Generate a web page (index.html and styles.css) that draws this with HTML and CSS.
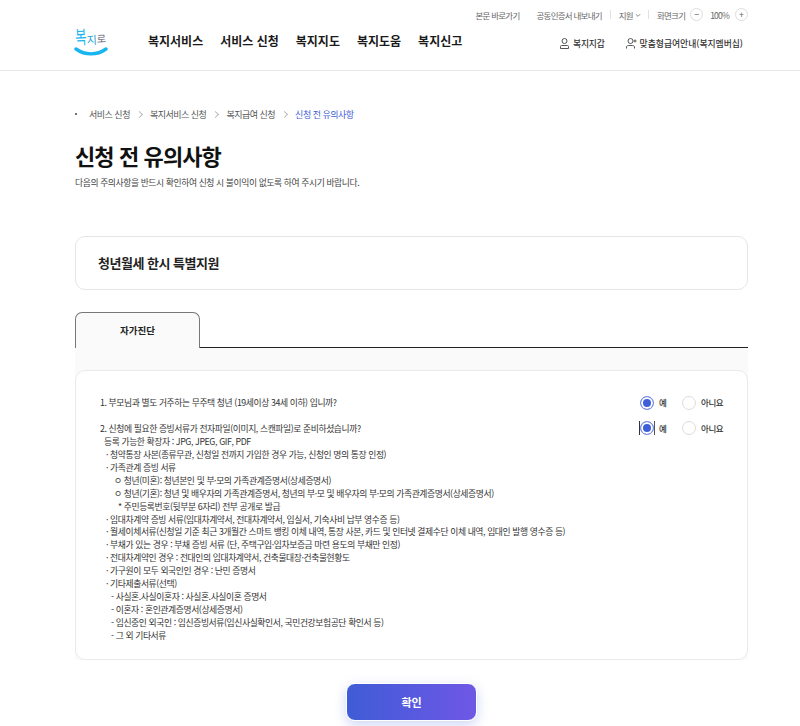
FILE: index.html
```html
<!DOCTYPE html>
<html lang="ko">
<head>
	<meta charset="UTF-8">
	<title>신청 전 유의사항</title>
	<link rel="stylesheet" href="styles.css">
</head>
<body>
	<header class="header">
		<div class="util">
			<a class="util-link">본문 바로가기</a>
			<a class="util-link cert">공동인증서 내보내기</a>
			<span class="util-sep"></span>
			<a class="util-link support">지원
				<svg class="chev" width="6" height="5" viewBox="0 0 7 5"><path d="M1 1l2.500 2.500L6 1" fill="none" stroke="#777" stroke-width="1"/></svg>
			</a>
			<span class="util-sep"></span>
			<a class="util-link size-label">화면크기</a>
			<span class="zoom-btn">−</span>
			<span class="util-link zoom-val">100%</span>
			<span class="zoom-btn">+</span>
		</div>
		<div class="main-bar">
			<div class="logo">
				<div class="logo-text"><span class="logo-a">복</span><span class="logo-b">지</span><span class="logo-c">로</span></div>
				<svg class="logo-smile" width="34" height="9" viewBox="0 0 34 9"><path d="M2 2c9 6.500 21 6.500 30 0" fill="none" stroke="#19b5f1" stroke-width="3.400" stroke-linecap="round"/></svg>
			</div>
			<nav class="gnb">
				<a>복지서비스</a>
				<a>서비스 신청</a>
				<a>복지지도</a>
				<a>복지도움</a>
				<a>복지신고</a>
			</nav>
			<div class="side-menu">
				<a class="side-link first">
					<svg width="9" height="11" viewBox="0 0 9 11" fill="none" stroke="#555" stroke-width="1"><circle cx="4.500" cy="3" r="2.500"/><path d="M.5 10.500V8.500c0-.6.400-1 1-1h6c.6 0 1 .4 1 1v2z"/></svg>
					복지지갑
				</a>
				<a class="side-link">
					<svg width="11" height="11" viewBox="0 0 11 11" fill="none" stroke="#555" stroke-width="1"><circle cx="4.500" cy="3" r="2.500"/><path d="M.5 10.500V9c0-1 1-1.500 2-1.500h4c1 0 2 .5 2 1.500v1.500M9 1.500v3M7.500 3h3"/></svg>
					맞춤형급여안내(복지멤버십)
				</a>
			</div>
		</div>
	</header>

	<main class="wrap">
		<ol class="crumbs">
			<li class="crumb-dot"></li>
			<li>서비스 신청</li>
			<li class="crumb-arrow"></li>
			<li>복지서비스 신청</li>
			<li class="crumb-arrow"></li>
			<li>복지급여 신청</li>
			<li class="crumb-arrow"></li>
			<li class="current">신청 전 유의사항</li>
		</ol>

		<h1 class="title">신청 전 유의사항</h1>
		<p class="lead">다음의 주의사항을 반드시 확인하여 신청 시 불이익이 없도록 하여 주시기 바랍니다.</p>

		<div class="service-box">청년월세 한시 특별지원</div>

		<div class="tabs">
			<div class="tab">자가진단</div>
		</div>

		<section class="panel">
			<div class="card">
				<div class="question q1">
					<p class="q-title">1. 부모님과 별도 거주하는 무주택 청년 (19세이상 34세 이하) 입니까?</p>
					<div class="choices">
						<label class="choice"><span class="radio on"></span>예</label>
						<label class="choice"><span class="radio"></span>아니요</label>
					</div>
				</div>
				<div class="question">
					<div class="q-body">
						<p class="q-title">2. 신청에 필요한 증빙서류가 전자파일(이미지, 스캔파일)로 준비하셨습니까?</p>
						<p class="i1">등록 가능한 확장자 : JPG, JPEG, GIF, PDF</p>
						<p class="i2">· 청약통장 사본(종류무관, 신청일 전까지 가입한 경우 가능, 신청인 명의 통장 인정)</p>
						<p class="i2">· 가족관계 증빙 서류</p>
						<p class="i3">ㅇ 청년(미혼): 청년본인 및 부·모의 가족관계증명서(상세증명서)</p>
						<p class="i3">ㅇ 청년(기혼): 청년 및 배우자의 가족관계증명서, 청년의 부·모 및 배우자의 부·모의 가족관계증명서(상세증명서)</p>
						<p class="i4">* 주민등록번호(뒷부분 6자리) 전부 공개로 발급</p>
						<p class="i2">· 임대차계약 증빙 서류(임대차계약서, 전대차계약서, 입실서, 기숙사비 납부 영수증 등)</p>
						<p class="i2">· 월세이체서류(신청일 기준 최근 3개월간 스마트 뱅킹 이체 내역, 통장 사본, 카드 및 인터넷 결제수단 이체 내역, 임대인 발행 영수증 등)</p>
						<p class="i2">· 부채가 있는 경우 : 부채 증빙 서류 (단, 주택구입·임차보증금 마련 용도의 부채만 인정)</p>
						<p class="i2">· 전대차계약인 경우 : 전대인의 임대차계약서, 건축물대장·건축물현황도</p>
						<p class="i2">· 가구원이 모두 외국인인 경우 : 난민 증명서</p>
						<p class="i2">· 기타제출서류(선택)</p>
						<p class="i5">- 사실혼.사실이혼자 : 사실혼.사실이혼 증명서</p>
						<p class="i5">- 이혼자 : 혼인관계증명서(상세증명서)</p>
						<p class="i5">- 임신중인 외국인 : 임신증빙서류(임신사실확인서, 국민건강보험공단 확인서 등)</p>
						<p class="i5">- 그 외 기타서류</p>
					</div>
					<div class="choices">
						<label class="choice"><span class="focus-mark"><span class="radio on"></span></span>예</label>
						<label class="choice"><span class="radio"></span>아니요</label>
					</div>
				</div>
			</div>
		</section>

		<div class="actions">
			<button class="btn-ok" type="button">확인</button>
		</div>
	</main>
</body>
</html>
```

FILE: styles.css
```css
*{box-sizing: border-box;}
html,body{height: 726px; overflow: hidden;}
body,p,h1,ol{margin: 0; padding: 0;}
li{list-style: none;}
body{background: #fff; color: #222; font-family: "Noto Sans CJK KR", "Noto Sans", sans-serif;}

/* header */
.header{height: 71px; border-bottom: 1px solid #e8e8e8; padding: 0 52px 0 75px;}
.util{display: flex; justify-content: flex-end; align-items: center; height: 28px; padding-top: 1px;}
.util-link{font-size: 8.5px; letter-spacing: -.75px; color: #666; display: flex; align-items: center; gap: 3px;}
.cert{margin-left: 17px;}
.support{gap: 2px;}
.chev{margin: 1px -1px 0 0;}
.util-sep{width: 1px; height: 9px; background: #e0e0e0; margin: 0 8px;}
.size-label{margin-right: 5px;}
.zoom-btn{display: flex; align-items: center; justify-content: center; width: 13px; height: 13px; border: 1px solid #ddd; border-radius: 50%; font-size: 9px; line-height: 1; color: #666;}
.zoom-val{margin: 0 6px 0 7px; letter-spacing: -.8px;}
.main-bar{display: flex; align-items: flex-start; height: 42px;}
.logo{width: 73px; height: 30px; margin-top: -2px; margin-left: -1px; margin-right: 1px;}
.logo-text{display: flex; align-items: flex-end; height: 18px; padding-left: 1px; font-weight: 400; line-height: 12px; white-space: nowrap; transform: rotate(-3deg);}
.logo-a{color: #19b5f1; font-size: 12.5px; transform: scaleY(1.5); transform-origin: bottom;}
.logo-b{color: #2a9fc9; font-size: 11px;}
.logo-c{color: #667; font-size: 10px;}
.logo-smile{display: block; margin-top: 3px;}
.gnb{display: flex; gap: 17px; font-size: 12px; font-weight: 700; color: #1a1a1a; line-height: 26px;}
.side-menu{margin-left: auto; margin-right: 5px; display: flex; gap: 21px; padding-top: 9px; font-size: 8.800px; font-weight: 500; color: #333;}
.side-link{display: flex; align-items: center; gap: 3px;}
.first{gap: 4px; letter-spacing: -.2px;}

/* content */
.wrap{width: 673px; margin-left: 75px;}
.crumbs{display: flex; align-items: center; height: 14px; margin-top: 36px; font-size: 9px; letter-spacing: -.5px; color: #555;}
.crumb-dot{width: 2px; height: 2px; background: #444; border-radius: 50%; margin-right: 12px;}
.crumb-arrow{width: 5px; height: 5px; border-top: 1px solid #bbb; border-right: 1px solid #bbb; transform: rotate(45deg); margin: 0 8px 0 7px;}
.current{color: #3f5fd8;}
.title{font-size: 22px; font-weight: 700; line-height: 32px; letter-spacing: -.9px; color: #111; margin-top: 18px;}
.lead{font-size: 8.800px; line-height: 14px; letter-spacing: -.4px; color: #444; margin-top: 5px;}

.service-box{height: 54px; margin-top: 46px; border: 1px solid #e6e6e6; border-radius: 10px; padding: 0 22px; font-size: 13px; font-weight: 700; letter-spacing: -.5px; line-height: 52px; color: #222;}

.tabs{height: 36px; margin-top: 22px; border-bottom: 1px solid #222;}
.tab{width: 125px; height: 36px; background: #fafafa; border: 1px solid #777; border-bottom: none; border-radius: 7px 7px 0 0; font-size: 9.500px; font-weight: 700; line-height: 34px; text-align: center; color: #222;}

.panel{background: #fafafa; padding-top: 22px;}
.card{background: #fff; border: 1px solid #eaeaea; border-radius: 10px; padding: 26px 24px 12px 24px; height: 290px;}
.question{display: flex; justify-content: space-between; font-size: 8.800px; line-height: 12.940px; letter-spacing: -.4px; color: #333;}
.q1{margin-bottom: 13px;}
.i1{padding-left: 4px;}
.i2{padding-left: 6px;}
.i3{padding-left: 14px;}
.i4{padding-left: 18px;}
.i5{padding-left: 11px;}
.choices{display: flex; flex-shrink: 0; height: 13px; margin-top: -1px;}
.choice{display: flex; align-items: center; gap: 5px; font-size: 8.500px; font-weight: 500; white-space: nowrap; color: #333; width: 42px;}
.choice + .choice{width: 41px;}
.radio{width: 14px; height: 14px; border-radius: 50%; border: 1px solid #ddd; background: #fff; flex-shrink: 0;}
.radio.on{border-color: #7d8fe8; background: #3f5fd8; box-shadow: inset 0 0 0 2px #fff;}
.focus-mark{display: flex; margin: 0 -1px; border-left: 1px solid #333; border-right: 1px solid #555;}

.actions{display: flex; justify-content: center; margin-top: 23px;}
.btn-ok{width: 131px; height: 38px; border: 1px solid #fff; border-radius: 9px; background: linear-gradient(90deg, #3f5cd6, #6f57e6); color: #fff; font-family: inherit; font-size: 11px; font-weight: 700; box-shadow: 0 4px 12px rgba(63, 92, 214, .25);}
```
